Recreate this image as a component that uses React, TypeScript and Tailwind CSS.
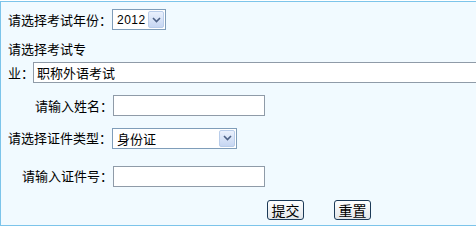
import React from "react";

const font = "font-['SimSun','Noto_Sans_CJK_SC',sans-serif]";

const SelectArrow: React.FC = () => (
  <div className="w-[16px] h-[17px] rounded-[2px] border border-[#b9cdea] bg-gradient-to-b from-[#eaf1fd] to-[#c6d6f2] flex items-center justify-center">
    <svg width="9" height="6" viewBox="0 0 9 6">
      <path d="M1 1 L4.5 4.5 L8 1" stroke="#4d6185" strokeWidth="1.6" fill="none" />
    </svg>
  </div>
);

const FakeSelect: React.FC<{ value: string; width: string; digits?: boolean }> = ({ value, width, digits }) => (
  <div className={`${width} h-[21px] bg-white border border-[#7f9db9] flex items-center justify-between pl-[4px] pr-[1px]`}>
    <span className={`${digits ? "text-[12px] tracking-[0.5px] font-['Liberation_Sans',sans-serif]" : "text-[13px]"} leading-none text-black`}>{value}</span>
    <SelectArrow />
  </div>
);

const TextBox: React.FC<{ width: string; value?: string }> = ({ width, value }) => (
  <div className={`${width} h-[21px] bg-white border border-[#8f9ba8] flex items-center pl-[3px]`}>
    <span className="text-[13px] leading-none text-black">{value}</span>
  </div>
);

const Btn: React.FC<{ label: string }> = ({ label }) => (
  <button className="w-[37px] h-[20px] rounded-[3px] border border-[#1c3a58] bg-gradient-to-b from-white to-[#e2e6ea] text-[14px] leading-none text-black flex items-center justify-center">
    {label}
  </button>
);

export default function App() {
  return (
    <div className={`w-[476px] h-[227px] bg-white pt-px overflow-hidden ${font}`}>
      <div className="h-[225px] w-[480px] bg-[#f1faff] border-t border-l border-b border-[#7cc4ea] text-[13px] text-black">
        {/* 年份 */}
        <div className="flex items-center h-[21px] mt-[7px] pl-[7px]">
          <span className="w-[104px]">请选择考试年份：</span>
          <FakeSelect value="2012" width="w-[54px]" digits />
        </div>

        {/* 专业 */}
        <div className="mt-[11px] pl-[7px] leading-[16px]">请选择考试专</div>
        <div className="flex items-center h-[21px] mt-[5px] pl-[7px]">
          <span className="w-[25px]">业：</span>
          <TextBox width="w-[460px]" value="职称外语考试" />
        </div>

        {/* 姓名 */}
        <div className="flex items-center h-[21px] mt-[12px]">
          <span className="w-[112px] text-right">请输入姓名：</span>
          <TextBox width="w-[152px]" />
        </div>

        {/* 证件类型 */}
        <div className="flex items-center h-[22px] mt-[11px] pl-[7px]">
          <span className="w-[104px]">请选择证件类型：</span>
          <FakeSelect value="身份证" width="w-[125px]" />
        </div>

        {/* 证件号 */}
        <div className="flex items-center h-[22px] mt-[16px]">
          <span className="w-[112px] text-right">请输入证件号：</span>
          <TextBox width="w-[152px]" />
        </div>

        {/* 按钮 */}
        <div className="flex items-center mt-[13px] pl-[266px] gap-[30px]">
          <Btn label="提交" />
          <Btn label="重置" />
        </div>
      </div>
    </div>
  );
}
